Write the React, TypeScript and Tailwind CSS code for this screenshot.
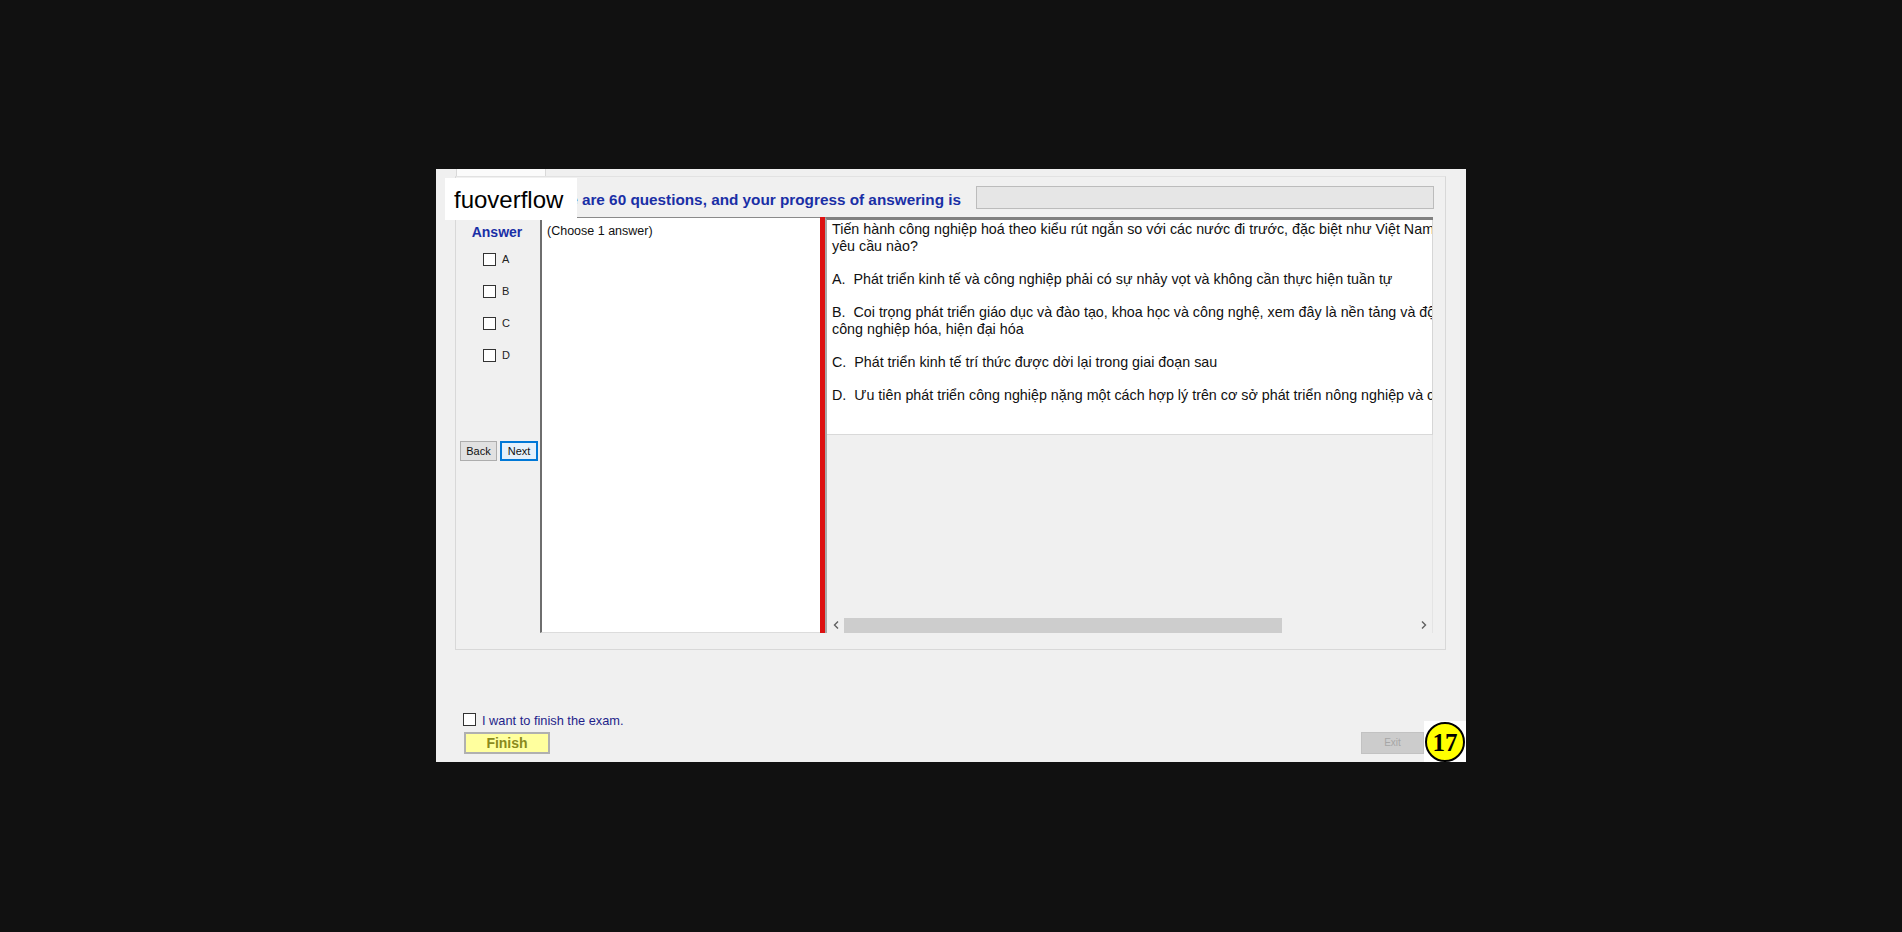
export default function App() {
  const box = "w-[13px] h-[13px] bg-white border border-[#333333] shrink-0";
  return (
    <div className="w-[1902px] h-[932px] bg-[#111111] overflow-hidden font-['Liberation_Sans',Arial,sans-serif]">
      <div className="pt-[169px] pl-[436px]">
        <div className="relative w-[1030px] h-[593px] bg-[#f0f0f0] flex flex-col">
          {/* tab header strip */}
          <div className="h-[7px] pl-[20px] flex">
            <div className="w-[90px] h-[7px] bg-[#fbfbfb] border-x border-[#d9d9d9]" />
          </div>
          {/* tab page */}
          <div className="ml-[19px] w-[991px] h-[474px] border border-[#d8d8d8] border-t-[#e2e2e2] bg-[#f0f0f0] flex flex-col">
            {/* header row */}
            <div className="h-[40px] flex items-start">
              <div className="w-[520px] pl-[80px] pt-[14px] whitespace-nowrap text-[15.3px] leading-[18px] font-bold text-[#1a2fa6] overflow-hidden">
                There are 60 questions, and your progress of answering is
              </div>
              <div className="mt-[9px] w-[458px] h-[23px] bg-[#e6e6e6] border border-[#bcbcbc]" />
            </div>
            {/* content row */}
            <div className="h-[416px] flex">
              {/* answer column */}
              <div className="w-[84px] flex flex-col">
                <div className="pt-[7px] h-[23px] pr-[2px] text-center text-[14px] leading-[17px] font-bold text-[#1a2fa6]">Answer</div>
                <div className="mt-[13px] flex flex-col pl-[27px]">
                  {["A", "B", "C", "D"].map((l) => (
                    <div key={l} className="h-[32px] flex items-start gap-[6px]">
                      <div className={box} />
                      <span className="text-[11px] leading-[12px] text-[#222222]">{l}</span>
                    </div>
                  ))}
                </div>
                <div className="mt-[60px] pl-[4px] flex gap-[3px]">
                  <div className="w-[37px] h-[20px] bg-[#e1e1e1] border border-[#adadad] text-[11px] leading-[18px] text-center text-[#111111]">Back</div>
                  <div className="w-[38px] h-[20px] bg-[#e5f1fb] border-2 border-[#0078d7] text-[11px] leading-[16px] text-center text-[#111111]">Next</div>
                </div>
              </div>
              {/* choose box */}
              <div className="w-[280px] bg-white border-l-2 border-l-[#6e6e6e] border-t border-t-[#8a8a8a] border-b border-b-[#dcdcdc] pl-[5px] pt-[6px]">
                <div className="text-[12.5px] leading-[14px] text-[#111111]">(Choose 1 answer)</div>
              </div>
              {/* red bar */}
              <div className="w-[5px] bg-[#dd1111]" />
              {/* question panel */}
              <div className="w-[608px] flex flex-col border-t-[3px] border-t-[#808080] border-l-2 border-l-[#a8a8a8]">
                <div className="h-[215px] bg-white border-r border-r-[#d6d6d6] border-b border-b-[#d9d9d9] pl-[5px] pt-[1px] overflow-hidden whitespace-pre text-[14.3px] leading-[16.6px] text-[#111111]">
                  <div>Tiến hành công nghiệp hoá theo kiểu rút ngắn so với các nước đi trước, đặc biệt như Việt Nam cần thực hiện</div>
                  <div>yêu cầu nào?</div>
                  <div>&nbsp;</div>
                  <div>A.  Phát triển kinh tế và công nghiệp phải có sự nhảy vọt và không cần thực hiện tuần tự</div>
                  <div>&nbsp;</div>
                  <div>B.  Coi trọng phát triển giáo dục và đào tạo, khoa học và công nghệ, xem đây là nền tảng và động lực cho</div>
                  <div>công nghiệp hóa, hiện đại hóa</div>
                  <div>&nbsp;</div>
                  <div>C.  Phát triển kinh tế trí thức được dời lại trong giai đoạn sau</div>
                  <div>&nbsp;</div>
                  <div>D.  Ưu tiên phát triển công nghiệp nặng một cách hợp lý trên cơ sở phát triển nông nghiệp và công nghiệp nhẹ</div>
                </div>
                <div className="flex-1 bg-[#f0f0f0] border-r border-r-[#e4e4e4]" />
                <div className="h-[16px] flex items-center bg-[#f0f0f0] border-r border-r-[#e4e4e4]">
                  <div className="w-[17px] h-[16px] flex items-center justify-center">
                    <svg width="6" height="8" viewBox="0 0 6 8"><path d="M5 0.5 L1.5 4 L5 7.5" fill="none" stroke="#606060" strokeWidth="1.4" /></svg>
                  </div>
                  <div className="w-[438px] h-[15px] bg-[#cdcdcd]" />
                  <div className="flex-1" />
                  <div className="w-[17px] h-[16px] flex items-center justify-center">
                    <svg width="6" height="8" viewBox="0 0 6 8"><path d="M1 0.5 L4.5 4 L1 7.5" fill="none" stroke="#606060" strokeWidth="1.4" /></svg>
                  </div>
                </div>
              </div>
            </div>
          </div>
          {/* bottom area */}
          <div className="flex flex-col pl-[27px] pt-[63px]">
            <div className="flex items-center gap-[6px] h-[13px]">
              <div className={box} />
              <span className="text-[12.8px] leading-[15px] mt-[2px] text-[#1f1f8a]">I want to finish the exam.</span>
            </div>
            <div className="mt-[6px] flex justify-between pr-[42px]">
              <div className="ml-[1px] w-[86px] h-[22px] bg-[#ffff9e] border-2 border-[#b0b0b0] text-center text-[14px] leading-[18px] font-bold text-[#8a8a1c]">Finish</div>
              <div className="w-[63px] h-[22px] bg-[#cccccc] border border-[#c2c2c2] text-center text-[10px] leading-[20px] text-[#a6a6a6]">Exit</div>
            </div>
          </div>
          {/* fuoverflow overlay */}
          <div className="absolute left-[9px] top-[9px] w-[132px] h-[42px] bg-white pl-[9px] pt-[2px] flex items-center text-[24px] leading-[28px] text-black">fuoverflow</div>
          {/* badge */}
          <div className="absolute left-[988px] top-[552px] w-[42px] h-[41px] bg-white flex items-end justify-center">
            <div className="w-[40px] h-[40px] rounded-full bg-[#ffff00] border-2 border-black flex items-center justify-center font-['Liberation_Serif',serif] font-bold text-[25px] leading-[25px] text-black">17</div>
          </div>
        </div>
      </div>
    </div>
  );
}
